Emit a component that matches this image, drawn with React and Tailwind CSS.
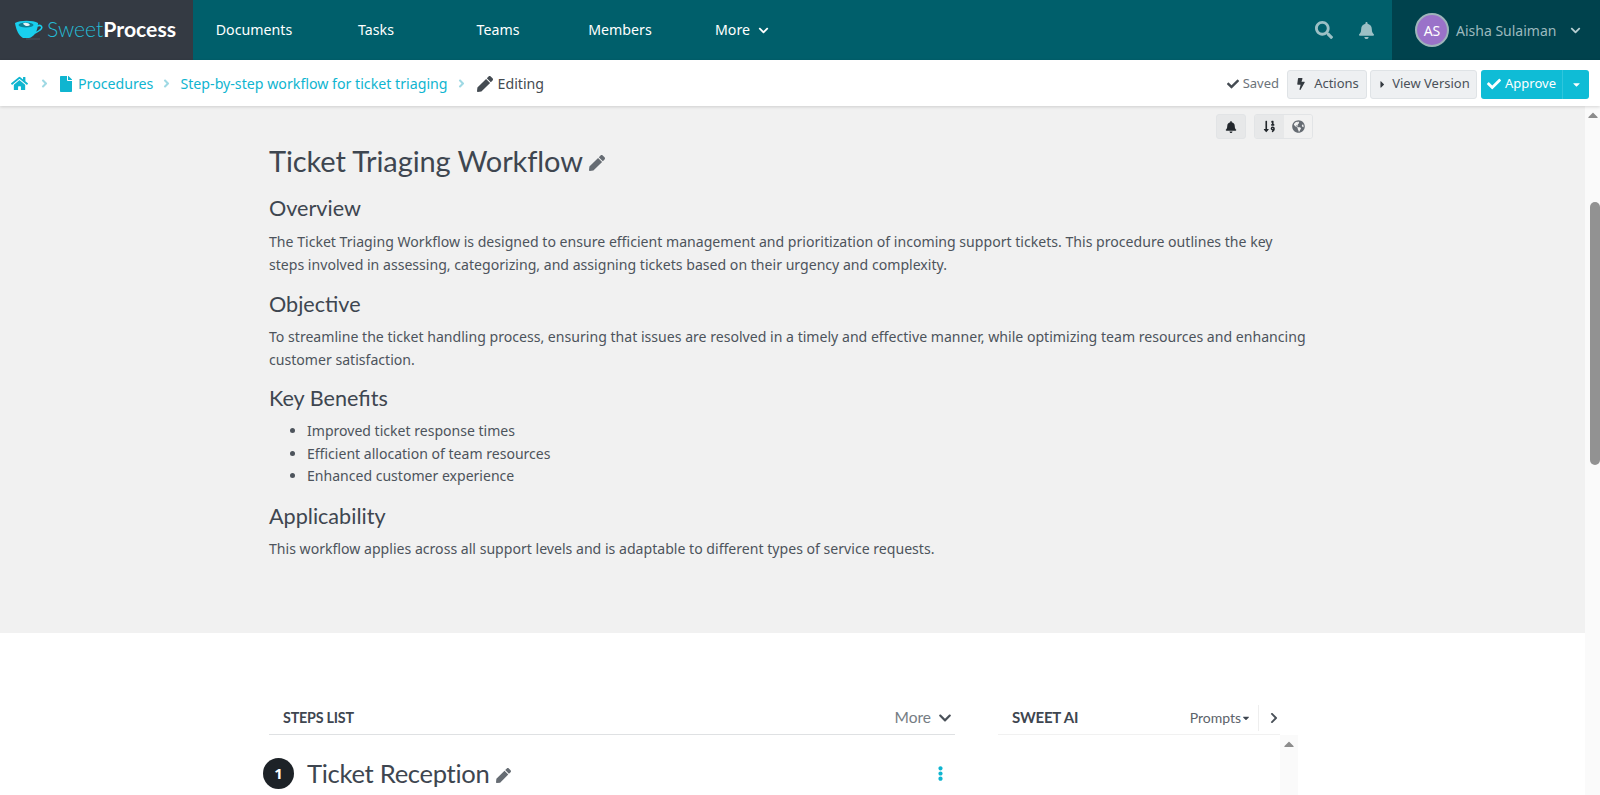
import {
  FaHome,
  FaFile,
  FaAngleRight,
  FaPen,
  FaCheck,
  FaBolt,
  FaCaretRight,
  FaCaretDown,
  FaCaretUp,
  FaBell,
  FaSortNumericDown,
  FaGlobeAmericas,
  FaSearch,
  FaChevronDown,
  FaEllipsisV,
  FaChevronRight,
} from "react-icons/fa"

const noto = "font-['Noto_Sans','Open_Sans',sans-serif]"
const lato = "font-['Lato',sans-serif]"

const Logo = () => (
  <div className="flex items-center w-[193px] h-full bg-[#343a43] pl-[14px]">
    <svg width="29" height="20" viewBox="0 0 29 20" className="mr-[4px]">
      <path d="M1 3 C6 0 19 0 24 3 C24 11 20 17 15 18 L9 18 C5 16 2 10 1 3 Z" fill="#19cfee" />
      <path d="M23 6 C28 4 29 8 26 10 C25 11 23 12 21 13" fill="none" stroke="#19cfee" strokeWidth="1.6" />
      <ellipse cx="12" cy="5" rx="7.5" ry="2.6" fill="#0e7f94" />
      <path d="M9 3.5 C11 2 15 3 16 5 C14 7 10 6 9 3.5 Z" fill="#e8f4f7" />
      <path d="M12 19 L26 19" stroke="#4d5560" strokeWidth="1" />
    </svg>
    <span className={`${lato} text-[21.2px] leading-none`}>
      <span className="font-light text-[#25bcd6]">Sweet</span>
      <span className="font-bold text-white">Process</span>
    </span>
  </div>
)

const NavItem = ({ children }) => (
  <a className="flex items-center justify-center w-[122px] h-full text-[14.2px] text-white">{children}</a>
)

const Crumb = ({ children }) => <span className="text-[#0fb5d0]">{children}</span>

const Sep = () => <FaAngleRight className="text-[#9fd9e4] text-[13px] mx-[7px]" />

const ToolButton = ({ children, className = "" }) => (
  <button className={`flex items-center h-[29px] rounded-[3px] border border-[#dfe3e6] bg-[#eef0f2] text-[13px] text-[#4a5159] ${className}`}>
    {children}
  </button>
)

const Heading = ({ children, className = "" }) => (
  <h2 className={`${lato} text-[21.6px] leading-[30px] text-[#3e4650] ${className}`}>{children}</h2>
)

const Para = ({ children, className = "" }) => (
  <p className={`text-[14.1px] leading-[22.5px] text-[#4d545c] ${className}`}>{children}</p>
)

export default function App() {
  return (
    <div className={`${noto} h-screen overflow-hidden flex flex-col bg-white`}>
      <header className="flex items-stretch h-[60px] shrink-0 bg-[#005f6b]">
        <Logo />
        <nav className="flex items-center flex-1">
          <NavItem>Documents</NavItem>
          <NavItem>Tasks</NavItem>
          <NavItem>Teams</NavItem>
          <NavItem>Members</NavItem>
          <NavItem>
            More
            <FaChevronDown className="text-[11px] ml-[8px]" />
          </NavItem>
        </nav>
        <div className="flex items-center text-[#9cc0c5] mr-[17px]">
          <FaSearch className="text-[18px]" />
          <FaBell className="text-[17px] ml-[25px]" />
        </div>
        <div className="flex items-center w-[208px] bg-[#00424d] pl-[23px]">
          <div className="flex items-center justify-center w-[34px] h-[34px] rounded-full bg-[#9a72c9] border-2 border-[#9fb4bb] text-white text-[14px]">
            AS
          </div>
          <span className="ml-[7px] text-[14px] text-[#9cb9be]">Aisha Sulaiman</span>
          <FaChevronDown className="ml-[14px] text-[11px] text-[#b5cdd1]" />
        </div>
      </header>

      <div className="relative z-10 flex items-center justify-between h-[46px] shrink-0 pl-[11px] pr-[11px] pt-[2px] bg-white shadow-[0_1px_3px_rgba(0,0,0,0.15)]">
        <div className="flex items-center text-[14.2px]">
          <FaHome className="text-[#0fb5d0] text-[17px] mr-[3px]" />
          <Sep />
          <FaFile className="text-[#0fb5d0] text-[16px] mr-[4px]" />
          <Crumb>Procedures</Crumb>
          <Sep />
          <Crumb>Step-by-step workflow for ticket triaging</Crumb>
          <Sep />
          <FaPen className="text-[#444b52] text-[16px] mr-[5px] ml-[2px]" />
          <span className="text-[#444b52]">Editing</span>
        </div>
        <div className="flex items-center">
          <FaCheck className="text-[#444b52] text-[12px] mr-[4px]" />
          <span className="text-[13px] text-[#6c737a] mr-[8px]">Saved</span>
          <ToolButton className="w-[80px] justify-center mr-[3px]">
            <FaBolt className="text-[12px] text-[#343a40] mr-[7px]" />
            Actions
          </ToolButton>
          <ToolButton className="w-[107px] justify-center mr-[4px]">
            <FaCaretRight className="text-[11px] text-[#343a40] mr-[4px]" />
            View Version
          </ToolButton>
          <div className="flex h-[29px] w-[108px] rounded-[3px] overflow-hidden bg-[#0fbcd6] text-white text-[13px]">
            <div className="flex items-center justify-center flex-1 border-r border-[#2fc6dc]">
              <FaCheck className="text-[14px] mr-[4px]" />
              Approve
            </div>
            <div className="flex items-center justify-center w-[26px]">
              <FaCaretDown className="text-[11px]" />
            </div>
          </div>
        </div>
      </div>

      <div className="flex flex-1 min-h-0">
        <main className="flex-1 min-w-0">
          <section className="relative h-[527px] bg-[#f1f1f1] pl-[269px] pr-[279px] pt-[37px]">
            <div className="absolute top-[8px] right-[272px] flex items-center">
              <button className="flex items-center justify-center w-[30px] h-[25px] rounded-[3px] border border-[#e2e4e6] bg-[#e7e8e9] mr-[8px]">
                <FaBell className="text-[12px] text-[#22272c]" />
              </button>
              <div className="flex h-[25px] rounded-[3px] border border-[#e2e4e6] overflow-hidden">
                <span className="flex items-center justify-center w-[29px] bg-[#e7e8e9]">
                  <FaSortNumericDown className="text-[13px] text-[#22272c]" />
                </span>
                <span className="flex items-center justify-center w-[28px] bg-[#f1f1f1]">
                  <FaGlobeAmericas className="text-[13px] text-[#666c73]" />
                </span>
              </div>
            </div>

            <h1 className={`${lato} flex items-center text-[29px] tracking-[-0.1px] leading-[36px] text-[#3e4650]`}>
              Ticket Triaging Workflow
              <FaPen className="text-[16px] text-[#666c73] ml-[6px] mt-[4px]" />
            </h1>
            <Heading className="mt-[14px]">Overview</Heading>
            <Para className="mt-[8px]">
              The Ticket Triaging Workflow is designed to ensure efficient management and prioritization of incoming support tickets. This procedure outlines the key steps involved in assessing, categorizing, and assigning tickets based on their urgency and complexity.
            </Para>
            <Heading className="mt-[13px]">Objective</Heading>
            <Para className="mt-[7px]">
              To streamline the ticket handling process, ensuring that issues are resolved in a timely and effective manner, while optimizing team resources and enhancing customer satisfaction.
            </Para>
            <Heading className="mt-[12px]">Key Benefits</Heading>
            <ul className="list-disc pl-[38px] mt-[7px] text-[14.06px] leading-[22.5px] text-[#4d545c]">
              <li>Improved ticket response times</li>
              <li>Efficient allocation of team resources</li>
              <li>Enhanced customer experience</li>
            </ul>
            <Heading className="mt-[13px]">Applicability</Heading>
            <Para className="mt-[7px]">
              This workflow applies across all support levels and is adaptable to different types of service requests.
            </Para>
          </section>

          <section className="flex pl-[269px] pt-[71px]">
            <div className="w-[686px]">
              <div className={`${lato} flex items-center justify-between h-[31px] pb-[3px] pl-[14px] border-b border-[#dfe1e3]`}>
                <span className="text-[14.3px] font-bold text-[#3e4650] tracking-[-0.2px]">STEPS LIST</span>
                <span className="flex items-center text-[15.5px] text-[#757c83] pr-[3px]">
                  More
                  <FaChevronDown className="ml-[7px] text-[14px] text-[#4a5159]" />
                </span>
              </div>
              <div className="flex items-center mt-[22px]">
                <span className="flex items-center justify-center w-[31px] h-[31px] -ml-[6px] rounded-full bg-[#1d2227] text-white text-[15px] font-bold">
                  1
                </span>
                <span className={`${lato} ml-[13px] text-[25.6px] tracking-[-0.3px] leading-[32px] text-[#3e4650]`}>Ticket Reception</span>
                <FaPen className="ml-[6px] mt-[4px] text-[15px] text-[#666c73]" />
                <FaEllipsisV className="ml-auto mr-[7px] text-[15px] text-[#0fb5d0]" />
              </div>
            </div>
            <div className="w-[282px] ml-[43px]">
              <div className={`${lato} flex items-center h-[31px] pb-[3px] pl-[14px] border-b border-[#f1f1f1]`}>
                <span className="text-[15px] font-bold text-[#3e4650] tracking-[-0.2px]">SWEET AI</span>
                <span className="ml-auto text-[14px] text-[#5c636a]">Prompts</span>
                <FaCaretDown className="text-[10px] text-[#3e4650]" />
                <span className="flex items-center h-[26px] ml-[7px] pl-[9px] border-l border-[#eeeeee]">
                  <FaChevronRight className="text-[12px] text-[#4a5159]" />
                </span>
              </div>
            </div>
            <div className="flex justify-center w-[18px] h-[60px] mt-[31px] bg-[#fafafa]">
              <FaCaretUp className="text-[16px] text-[#8c8c8c] mt-[1px]" />
            </div>
          </section>
        </main>

        <aside className="flex flex-col items-center w-[15px] shrink-0 bg-[#fafafa]">
          <FaCaretUp className="text-[16px] text-[#8c8c8c] mt-[1px]" />
          <div className="w-[10px] h-[263px] mt-[79px] ml-[4px] rounded-t-[5px] rounded-b-[5px] bg-[#929292]" />
        </aside>
      </div>
    </div>
  )
}
